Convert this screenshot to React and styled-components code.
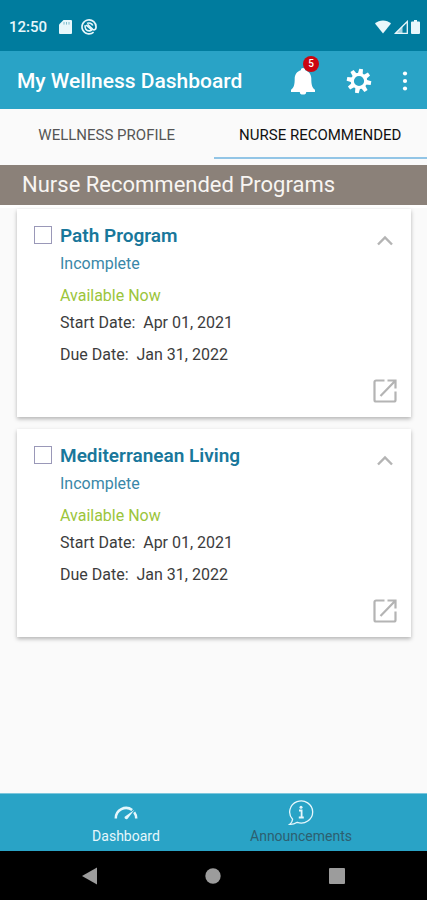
import React, { useState } from 'react';
import styled, { createGlobalStyle } from 'styled-components';

const GlobalStyle = createGlobalStyle`
  * {
    box-sizing: border-box;
  }

  body {
    background: #fafafa;
    font-family: Roboto, 'Liberation Sans', sans-serif;
    margin: 0;
  }

  button {
    background: none;
    border: 0;
    color: inherit;
    cursor: pointer;
    font-family: inherit;
    padding: 0;
  }

  svg {
    display: block;
  }
`;

const Screen = styled.div`
  display: flex;
  flex-direction: column;
  min-height: 100vh;
`;

const StatusBar = styled.div`
  align-items: center;
  background: #007c9e;
  color: #e8f7fb;
  display: flex;
  height: 51px;
  justify-content: space-between;
  padding: 2px 7px 0 9px;
`;

const StatusGroup = styled.div`
  align-items: center;
  display: flex;
  gap: ${({ $gap }) => $gap}px;
`;

const Clock = styled.span`
  font-size: 15px;
  font-weight: 500;
  line-height: 20px;
`;

const AppBar = styled.header`
  align-items: center;
  background: #29a3c6;
  color: #fff;
  display: flex;
  height: 58px;
  justify-content: space-between;
  padding: 2px 4px 0 17px;
`;

const AppTitle = styled.h1`
  font-size: 21px;
  font-weight: 500;
  line-height: 28px;
  margin: 0;
  white-space: nowrap;
`;

const AppActions = styled.div`
  align-items: center;
  display: flex;
`;

const IconButton = styled.button`
  display: flex;
  justify-content: center;
  position: relative;
  width: ${({ $width }) => $width}px;
`;

const Badge = styled.span`
  background: #cc0610;
  border-radius: 50%;
  color: #fff;
  font-size: 10px;
  font-weight: 500;
  height: 16px;
  line-height: 16px;
  position: absolute;
  right: 12px;
  text-align: center;
  top: -12px;
  width: 16px;
`;

const Tabs = styled.nav`
  display: grid;
  grid-template-columns: 1fr 1fr;
  height: 56px;
  padding-bottom: 6px;
`;

const Tab = styled.button`
  && {
    border-bottom: 2px solid ${({ $active }) => ($active ? '#92c5e6' : 'transparent')};
    color: ${({ $active }) => ($active ? '#111' : '#555')};
    padding-top: 4px;
  }
  font-size: 15px;
  font-weight: 400;
  line-height: 20px;
  white-space: nowrap;
`;

const Banner = styled.h2`
  background: #8b8179;
  border-bottom: 3px solid #fff;
  color: #f8f5f2;
  font-size: 22px;
  font-weight: 400;
  line-height: 40px;
  margin: 0;
  padding-left: 22px;
`;

const ProgramList = styled.main`
  display: flex;
  flex: 1;
  flex-direction: column;
  gap: 12px;
  padding: 1px 16px 16px 17px;
`;

const Card = styled.article`
  background: #fff;
  box-shadow: 0 2px 4px rgba(0, 0, 0, 0.28);
  display: grid;
  grid-template-columns: 26px 1fr 24px;
  padding: 14px 14px 14px 17px;
`;

const Checkbox = styled.input`
  appearance: none;
  background: #fff;
  border: 1px solid #9a98b8;
  height: 18px;
  margin: 3px 0 0;
  width: 18px;
  &:checked {
    background: #007c9e;
  }
`;

const CardTitle = styled.label`
  color: #19779b;
  display: block;
  font-size: 19px;
  font-weight: 600;
  line-height: 26px;
`;

const CardDetails = styled.div`
  min-height: 180px;
`;

const CardText = styled.p`
  color: ${({ $color }) => $color || '#3c3c3c'};
  font-size: 16px;
  line-height: 20px;
  margin: ${({ $space }) => $space}px 0 0;
  white-space: pre-wrap;
`;

const CardActions = styled.div`
  color: #b4b4b4;
  display: flex;
  flex-direction: column;
  justify-content: space-between;
  padding-top: 12px;
`;

const BottomNav = styled.nav`
  background: #29a3c6;
  border-top: 1px solid #7cc6dc;
  display: flex;
  height: 58px;
  justify-content: center;
`;

const NavItem = styled.button`
  align-items: center;
  display: flex;
  flex-direction: column;
  width: 41%;
  && {
    color: ${({ $active }) => ($active ? '#e6f7fc' : '#2d5f70')};
  }
`;

const NavIcon = styled.span`
  align-items: center;
  color: #e6f7fc;
  display: flex;
  height: 32px;
  padding-top: 5px;
`;

const NavLabel = styled.span`
  font-size: 14px;
  line-height: 20px;
`;

const SystemNav = styled.div`
  align-items: center;
  background: #000;
  color: #9c9c9c;
  display: flex;
  height: 49px;
  justify-content: center;
`;

const SystemButton = styled.button`
  && {
    display: flex;
    justify-content: center;
    width: 29%;
  }
`;

const SdCardIcon = () => (
  <svg width="13" height="14" viewBox="0 0 13 14" fill="currentColor">
    <path d="M4.5 0H12a1 1 0 0 1 1 1v12a1 1 0 0 1-1 1H1a1 1 0 0 1-1-1V4.5z" />
    <path d="M5 2v2.6M7.5 2v2.6M10 2v2.6" stroke="#7fbccd" />
  </svg>
);

const SyncIcon = () => (
  <svg width="16" height="16" viewBox="0 0 16 16" fill="none" stroke="currentColor">
    <path d="M12.6 13.2A7 7 0 1 1 15 8.500c0 2-1.800 3-3.200 1.800L6.500 5.500" strokeWidth="1.700" />
    <path d="M11.800 6.500A4.300 4.300 0 0 0 6 4.400M4.200 6.300c-.8 3 1.200 5.600 4 5.600 1 0 2-.4 2.600-1L5 6" strokeWidth="1.600" />
  </svg>
);

const WifiIcon = () => (
  <svg width="16" height="14" viewBox="0 0 17 14" fill="currentColor">
    <path d="M8.5 14L0 3.4C2.3 1.2 5.3 0 8.5 0s6.2 1.2 8.5 3.4z" />
  </svg>
);

const SignalIcon = () => (
  <svg width="14" height="14" viewBox="0 0 14 14">
    <path d="M1.5 13.3L13.3 1.5V13.3z" fill="none" stroke="currentColor" strokeWidth="1.3" />
    <path d="M1 13.5L8.5 6v7.5z" fill="currentColor" opacity="0.7" />
  </svg>
);

const BatteryIcon = () => (
  <svg width="9" height="14" viewBox="0 0 9 14" fill="currentColor">
    <path d="M3 0h3v1.5h2a1 1 0 0 1 1 1V13a1 1 0 0 1-1 1H1a1 1 0 0 1-1-1V2.5a1 1 0 0 1 1-1h2z" />
  </svg>
);

const BellIcon = () => (
  <svg width="24" height="27" viewBox="0 0 24 27" fill="currentColor">
    <path d="M12 0a2.200 2.200 0 0 1 2.200 2.300C18 3.400 20.300 6.500 20.300 10.500c0 6.500.800 9 3.700 11.300V24H0v-2.200c2.900-2.300 3.700-4.800 3.700-11.300 0-4 2.300-7.100 6.100-8.200A2.200 2.200 0 0 1 12 0z" />
    <path d="M8.800 24h6.400a3.200 2.600 0 0 1-6.400 0z" />
  </svg>
);

const GEAR_ANGLES = [0, 45, 90, 135, 180, 225, 270, 315];

const GearIcon = () => (
  <svg width="26" height="26" viewBox="-13 -13 26 26">
    <circle r="6.7" fill="none" stroke="currentColor" strokeWidth="3.2" />
    {GEAR_ANGLES.map(angle => (
      <path key={angle} d="M-2.4-7L-1.9-12.2H1.9L2.4-7z" fill="currentColor" transform={`rotate(${angle + 10})`} />
    ))}
  </svg>
);

const MoreIcon = () => (
  <svg width="6" height="20" viewBox="0 0 6 20" fill="currentColor">
    <circle cx="3" cy="2.5" r="2.1" />
    <circle cx="3" cy="10" r="2.1" />
    <circle cx="3" cy="17.5" r="2.1" />
  </svg>
);

const ChevronIcon = ({ open }) => (
  <svg width="24" height="12" viewBox="0 0 24 12" fill="none" stroke="currentColor" strokeWidth="2.4">
    <path d={open ? 'M5 9.5L12 2.5L19 9.5' : 'M5 2.5L12 9.5L19 2.5'} />
  </svg>
);

const OpenIcon = () => (
  <svg width="24" height="24" viewBox="0 0 24 24" fill="none" stroke="currentColor" strokeWidth="2.2">
    <path d="M11.500 1.500H3a1.500 1.500 0 0 0-1.500 1.500v18A1.500 1.500 0 0 0 3 22.500h18a1.500 1.500 0 0 0 1.500-1.500v-8.500" />
    <path d="M14.500 1.500h8v8M22.500 1.500L7.500 17" />
  </svg>
);

const GaugeIcon = () => (
  <svg width="24" height="14" viewBox="0 0 24 14">
    <path d="M1.8 12.5A10.3 10.3 0 0 1 18.200 4M20.200 6.200a10.300 10.300 0 0 1 2 6.300" fill="none" stroke="currentColor" strokeWidth="2.500" />
    <path d="M20.500 3.800L13.400 12.900a1.800 1.800 0 0 1-2.700-2.200z" fill="currentColor" />
  </svg>
);

const InfoBubbleIcon = () => (
  <svg width="26" height="26" viewBox="0 0 26 26" fill="none" stroke="currentColor" strokeWidth="1.3">
    <path d="M4.6 19.3A11.5 11 0 1 1 9.2 22.3C6.5 24 4 24.6 1.6 24.4 3.5 23 4.5 21.3 4.6 19.3z" />
    <path d="M11 10.500h2.600v6.800M10.800 17.500h5" strokeWidth="1.800" />
    <circle cx="13" cy="7.300" r="1.500" fill="currentColor" stroke="none" />
  </svg>
);

const BackIcon = () => (
  <svg width="16" height="18" viewBox="0 0 16 18" fill="currentColor">
    <path d="M0 9L15 .5v17z" />
  </svg>
);

const HomeIcon = () => (
  <svg width="16" height="16" viewBox="0 0 16 16" fill="currentColor">
    <circle cx="8" cy="8" r="7.7" />
  </svg>
);

const RecentsIcon = () => (
  <svg width="16" height="16" viewBox="0 0 16 16" fill="currentColor">
    <rect width="16" height="16" rx="1" />
  </svg>
);

const PROGRAMS = [
  { id: 'path', name: 'Path Program', start: 'Apr 01, 2021', due: 'Jan 31, 2022' },
  { id: 'mediterranean', name: 'Mediterranean Living', start: 'Apr 01, 2021', due: 'Jan 31, 2022' },
];

const ProgramCard = ({ id, name, start, due }) => {
  const [open, setOpen] = useState(true);

  return (
    <Card>
      <Checkbox type="checkbox" id={id} />
      <CardDetails>
        <CardTitle htmlFor={id}>{name}</CardTitle>
        <CardText $color="#3a87a8" $space={5}>Incomplete</CardText>
        {open && (
          <>
            <CardText $color="#9bc53b" $space={12}>Available Now</CardText>
            <CardText $space={7}>{`Start Date:  ${start}`}</CardText>
            <CardText $space={12}>{`Due Date:  ${due}`}</CardText>
          </>
        )}
      </CardDetails>
      <CardActions>
        <button type="button" aria-label="Toggle details" onClick={() => setOpen(!open)}>
          <ChevronIcon open={open} />
        </button>
        <button type="button" aria-label="Open program">
          <OpenIcon />
        </button>
      </CardActions>
    </Card>
  );
};

const App = () => {
  const [tab, setTab] = useState('nurse');

  return (
    <Screen>
      <GlobalStyle />
      <StatusBar>
        <StatusGroup $gap={12}>
          <Clock>12:50</Clock>
          <StatusGroup $gap={9}>
            <SdCardIcon />
            <SyncIcon />
          </StatusGroup>
        </StatusGroup>
        <StatusGroup $gap={3}>
          <WifiIcon />
          <SignalIcon />
          <BatteryIcon />
        </StatusGroup>
      </StatusBar>
      <AppBar>
        <AppTitle>My Wellness Dashboard</AppTitle>
        <AppActions>
          <IconButton type="button" $width={56} aria-label="Notifications">
            <BellIcon />
            <Badge>5</Badge>
          </IconButton>
          <IconButton type="button" $width={56} aria-label="Settings">
            <GearIcon />
          </IconButton>
          <IconButton type="button" $width={36} aria-label="More options">
            <MoreIcon />
          </IconButton>
        </AppActions>
      </AppBar>
      <Tabs>
        <Tab type="button" $active={tab === 'profile'} onClick={() => setTab('profile')}>
          WELLNESS PROFILE
        </Tab>
        <Tab type="button" $active={tab === 'nurse'} onClick={() => setTab('nurse')}>
          NURSE RECOMMENDED
        </Tab>
      </Tabs>
      <Banner>Nurse Recommended Programs</Banner>
      <ProgramList>
        {PROGRAMS.map(program => (
          <ProgramCard key={program.id} {...program} />
        ))}
      </ProgramList>
      <BottomNav>
        <NavItem type="button" $active>
          <NavIcon>
            <GaugeIcon />
          </NavIcon>
          <NavLabel>Dashboard</NavLabel>
        </NavItem>
        <NavItem type="button">
          <NavIcon>
            <InfoBubbleIcon />
          </NavIcon>
          <NavLabel>Announcements</NavLabel>
        </NavItem>
      </BottomNav>
      <SystemNav>
        <SystemButton type="button" aria-label="Back">
          <BackIcon />
        </SystemButton>
        <SystemButton type="button" aria-label="Home">
          <HomeIcon />
        </SystemButton>
        <SystemButton type="button" aria-label="Recent apps">
          <RecentsIcon />
        </SystemButton>
      </SystemNav>
    </Screen>
  );
};

export default App;
